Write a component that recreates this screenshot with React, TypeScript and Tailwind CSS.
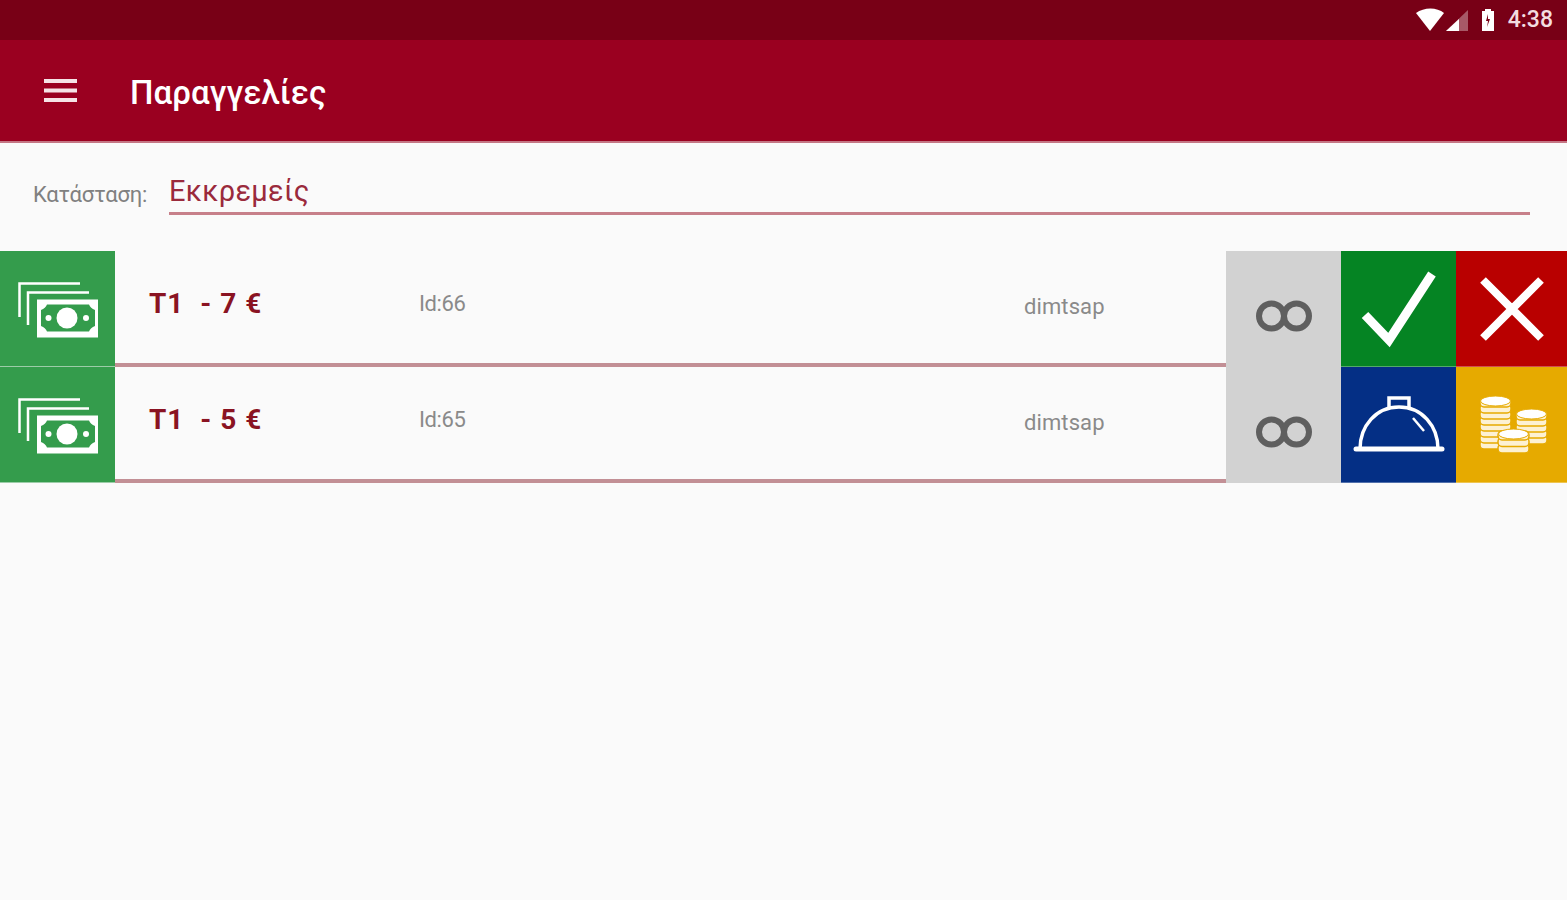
function MenuIcon() {
  return (
    <svg viewBox="0 0 33 23" className="w-[33px] h-[23px]" fill="#f6e3e6">
      <rect y="0" width="33" height="4" />
      <rect y="9.5" width="33" height="4" />
      <rect y="19" width="33" height="4" />
    </svg>
  );
}

function CashIcon() {
  return (
    <svg viewBox="0 0 80 60" className="w-[80px] h-[60px]" fill="none">
      <path d="M1.5 38V4.5H62" stroke="#fff" strokeWidth="2.5" />
      <path d="M10 46V13.5H71" stroke="#fff" strokeWidth="2.5" />
      <path fillRule="evenodd" clipRule="evenodd" fill="#fff" d="M19 20.5H80V58.5H19ZM29 25.5C28 28 26 30 23 31V47C26 48 28 50 29 52.5H71C72 50 74 48 77 47V31C74 30 72 28 71 25.5Z" />
      <circle cx="49" cy="39" r="10.5" fill="#fff" />
      <circle cx="30.5" cy="39" r="3" fill="#fff" />
      <circle cx="68" cy="39" r="3" fill="#fff" />
    </svg>
  );
}

function InfinityIcon() {
  return (
    <svg viewBox="0 0 56 32" className="w-[56px] h-[32px]" fill="none" stroke="#5f5f5f" strokeWidth="6">
      <ellipse cx="15.5" cy="16" rx="12.5" ry="12.5" />
      <ellipse cx="40.5" cy="16" rx="12.5" ry="12.5" />
    </svg>
  );
}

function CheckIcon() {
  return (
    <svg viewBox="0 0 76 78" className="w-[76px] h-[78px]" fill="none">
      <path d="M4 45L28 70L71 4" stroke="#fff" strokeWidth="9" />
    </svg>
  );
}

function CrossIcon() {
  return (
    <svg viewBox="0 0 64 64" className="w-[64px] h-[64px]" fill="none">
      <path d="M3 3L61 61M61 3L3 61" stroke="#fff" strokeWidth="8" />
    </svg>
  );
}

function BellIcon() {
  return (
    <svg viewBox="0 0 92 58" className="w-[92px] h-[58px]" fill="none" stroke="#fff">
      <path d="M3 53H89" strokeWidth="5" strokeLinecap="round" />
      <path d="M7 53C7 30 23 11 46 11S85 30 85 53" strokeWidth="3.5" />
      <path d="M36 11V2H56V11" strokeWidth="3.5" />
      <path d="M60 22L71 35" strokeWidth="2.5" />
    </svg>
  );
}

// one coin pile, drawn from the bottom coin up
function CoinStack({ x, y, n, gap }: { x: number; y: number; n: number; gap: number }) {
  const layers = Array.from({ length: n }, (_, i) => n - 1 - i);
  return (
    <g>
      {layers.map((i) => (
        <rect key={i} x={x - 15.5} y={y + i * gap} width="31" height="9" rx="4" fill="#fdf1d2" stroke="#e6aa00" strokeWidth="1.5" />
      ))}
      <ellipse cx={x} cy={y + 3} rx="15" ry="5" fill="#fff" stroke="#e6aa00" strokeWidth="1" />
    </g>
  );
}

function CoinsIcon() {
  return (
    <svg viewBox="0 0 70 62" className="w-[70px] h-[62px]">
      <CoinStack x={18.5} y={4} n={8} gap={6} />
      <CoinStack x={54.5} y={17} n={5} gap={6} />
      <CoinStack x={36.5} y={37} n={3} gap={6.5} />
    </svg>
  );
}

function OrderRow({ title, id, action1, action2, color1, color2 }: {
  title: string;
  id: string;
  action1: React.ReactNode;
  action2: React.ReactNode;
  color1: string;
  color2: string;
}) {
  return (
    <div className="flex h-[116px]">
      <div className="w-[115px] bg-[#349c4c] border-b border-[#9ccca8] flex items-start justify-center pt-[28px] pl-[1px]">
        <CashIcon />
      </div>
      <div className="flex-1 flex border-b-[4px] border-[#c28f95] text-[22px] text-[#8a8a8a] tracking-[-0.4px]">
        <div className="w-[304px] pl-[34px] pt-[34px] text-[28px] leading-[38px] font-bold text-[#8a1322] tracking-[1px] whitespace-pre">
          {title}
        </div>
        <div className="w-[605px] pt-[39px] leading-[28px]">{id}</div>
        <div className="pt-[42px] leading-[28px] tracking-[0.1px]">dimtsap</div>
      </div>
      <div className="w-[115px] bg-[#d2d2d2] flex items-center justify-center pt-[14px]">
        <InfinityIcon />
      </div>
      <div className={`w-[115px] border-b border-[#ffffff50] flex items-center justify-center ${color1}`}>{action1}</div>
      <div className={`w-[111px] border-b border-[#ffffff50] flex items-center justify-center ${color2}`}>{action2}</div>
    </div>
  );
}

export default function App() {
  return (
    <div className="w-[1567px] h-[900px] overflow-hidden bg-[#fafafa] font-['Roboto',sans-serif]">
      {/* status bar */}
      <div className="h-[40px] bg-[#780016] flex items-center justify-end pr-[14px] gap-[12px] text-white">
        <svg viewBox="0 0 54 24" className="w-[54px] h-[24px] -mr-[2px]">
          <path d="M0 5C8 -1 21 -1 28 5L14 23Z" fill="#fff" />
          <path d="M30 23L52 2V23Z" fill="#fff" fillOpacity="0.35" />
          <path d="M30 23L43 11V23Z" fill="#fff" />
        </svg>
        <svg viewBox="0 0 16 22" className="w-[16px] h-[22px]">
          <path fillRule="evenodd" d="M2 2H5V0H11V2H14V22H2ZM8 5L6 12H8L7 18L10 10H8Z" fill="#fff" />
        </svg>
        <span className="text-[23px] leading-[28px] font-medium text-[#f3dde0]">4:38</span>
      </div>

      {/* toolbar */}
      <div className="h-[103px] bg-[#9a0020] border-b-[2px] border-[#c47684] flex items-center text-white">
        <div className="w-[130px] pl-[44px] flex">
          <MenuIcon />
        </div>
        <div className="text-[33px] font-medium leading-[40px] tracking-[0.1px] pt-[4px]">Παραγγελίες</div>
      </div>

      {/* status filter */}
      <div className="h-[108px] flex pl-[33px] pr-[37px] pt-[31px]">
        <div className="w-[136px] pt-[7px] text-[22px] leading-[28px] text-[#808080] tracking-[-0.2px]">Κατάσταση:</div>
        <div className="flex-1 h-[41px] border-b-[3px] border-[#c7808a] text-[29px] leading-[34px] text-[#9a2a3c] tracking-[0.3px]">
          Εκκρεμείς
        </div>
      </div>

      <OrderRow
        title="T1  - 7 €"
        id="Id:66"
        action1={<CheckIcon />}
        action2={<CrossIcon />}
        color1="bg-[#058423]"
        color2="bg-[#b90000]"
      />
      <OrderRow
        title="T1  - 5 €"
        id="Id:65"
        action1={<BellIcon />}
        action2={<CoinsIcon />}
        color1="bg-[#042f85]"
        color2="bg-[#e6aa00]"
      />
    </div>
  );
}
